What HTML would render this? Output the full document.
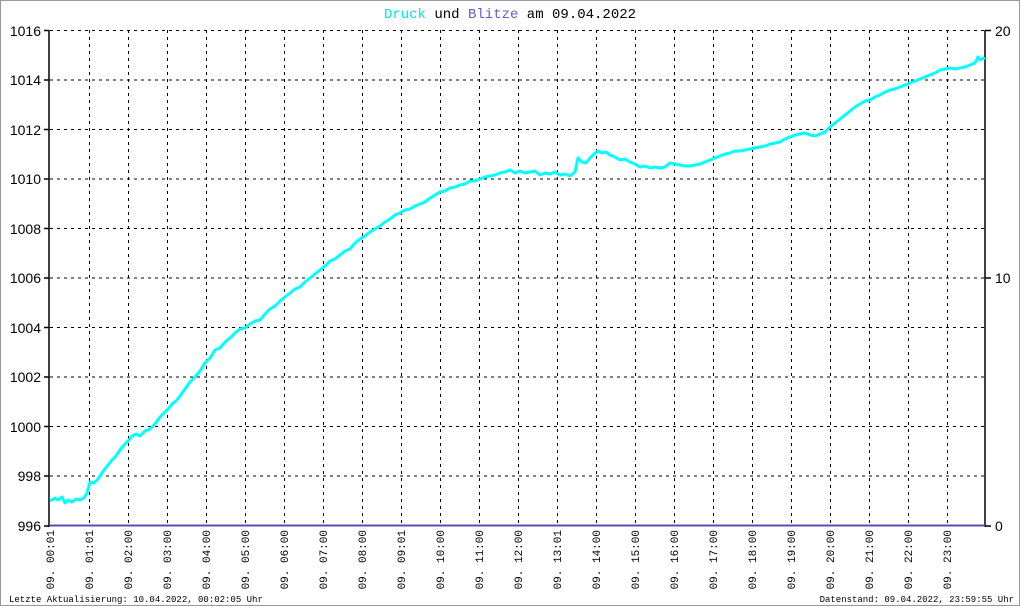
<!DOCTYPE html>
<html><head><meta charset="utf-8"><style>
html,body{margin:0;padding:0;background:#fff}
svg{display:block}
</style></head><body>
<svg width="1020" height="606" xmlns="http://www.w3.org/2000/svg">
<rect x="0.5" y="0.5" width="1019" height="605" fill="#fff" stroke="#999"/>
<text x="510" y="18" font-family="Liberation Mono, monospace" font-size="14" text-anchor="middle"><tspan fill="#00e5e5">Druck</tspan><tspan fill="#000"> und </tspan><tspan fill="#6a5acd">Blitze</tspan><tspan fill="#000"> am 09.04.2022</tspan></text>
<g stroke="#000" stroke-width="1" stroke-dasharray="3,4" fill="none">
<path d="M50 30.5H985M50 80H985M50 129.5H985M50 179H985M50 228.5H985M50 278H985M50 327.5H985M50 377H985M50 426.5H985M50 476H985"/>
<path d="M89.5 30V526M128.5 30V526M167.5 30V526M206.5 30V526M245.5 30V526M284.5 30V526M323.5 30V526M362.5 30V526M401.5 30V526M440.5 30V526M479.5 30V526M518.5 30V526M557.5 30V526M596.5 30V526M635.5 30V526M674.5 30V526M713.5 30V526M752.5 30V526M791.5 30V526M830.5 30V526M869.5 30V526M908.5 30V526M947.5 30V526"/>
</g>
<g stroke="#000" stroke-width="1.5" fill="none">
<path d="M49 30V527M985 30V527"/>
<path d="M44 30.5H49M44 80H49M44 129.5H49M44 179H49M44 228.5H49M44 278H49M44 327.5H49M44 377H49M44 426.5H49M44 476H49M44 526H49"/>
<path d="M985 30.5H991M985 278H991M985 526H991"/>
</g>
<line x1="49" y1="525.5" x2="985" y2="525.5" stroke="#5a4fb0" stroke-width="2"/>
<g font-family="Liberation Sans, sans-serif" font-size="14" text-anchor="end" fill="#000">
<text x="41" y="36">1016</text><text x="41" y="85">1014</text><text x="41" y="135">1012</text><text x="41" y="184">1010</text><text x="41" y="234">1008</text><text x="41" y="283">1006</text><text x="41" y="333">1004</text><text x="41" y="382">1002</text><text x="41" y="432">1000</text><text x="41" y="481">998</text><text x="41" y="531">996</text>
</g>
<g font-family="Liberation Sans, sans-serif" font-size="14" fill="#000">
<text x="995" y="36">20</text><text x="995" y="283">10</text><text x="995" y="531">0</text>
</g>
<polyline fill="none" stroke="#00ffff" stroke-width="3" stroke-linejoin="round" points="
50,501 55,498 58,500 62,497 65,503 68,500 72,502 76,499 80,500 84,498 87,493 90,482 94,483 98,479 100,476 104,470 108,465 112,460 116,456 120,450 125,444 128,441 132,436 136,434 140,436 145,431 150,429 155,424 160,417 164,413 168,409 172,404 176,401 180,396 185,389 190,382 195,377 200,371 205,363 210,358 215,350 220,348 225,342 230,338 235,333 240,329 245,328 250,324 255,321 260,320 265,314 270,309 275,306 280,301 285,297 290,293 295,289 300,287 305,282 310,278 315,274 320,270 325,266 330,261 335,259 340,255 345,251 350,249 355,243 360,239 365,236 370,232 375,229 380,226 385,222 390,219 395,215 400,213 405,210 410,209 415,206 420,204 425,202 430,198 435,195 440,192 445,191 450,188 455,187 460,185 465,184 470,181 475,181 480,179 485,177 490,176 495,175 500,173 505,172 510,170 515,173 520,171 525,173 530,172 535,171 540,175 545,173 550,174 555,172 560,175 565,174 570,176 575,172 578,158 582,162 586,163 590,158 594,154 598,151 602,153 606,152 610,155 615,157 620,160 625,159 630,162 635,164 640,167 645,166 650,168 655,167 660,168 665,167 670,163 675,164 680,165 685,166 690,166 695,165 700,164 705,162 710,160 715,158 720,156 725,154 730,153 735,151 740,151 745,150 750,149 755,148 760,147 765,146 770,144 775,143 780,142 785,139 790,137 795,135 800,134 805,133 810,135 815,136 820,134 825,132 830,127 835,123 840,119 845,115 850,111 855,107 860,104 865,101 870,100 875,97 880,95 885,92 890,90 895,89 900,87 905,85 910,83 915,81 920,79 925,77 930,75 935,73 940,70 945,69 950,68 955,69 960,68 965,67 970,65 975,63 978,57 980,60 983,58 985,59"/>
<g font-family="Liberation Mono, monospace" font-size="11" fill="#000" text-anchor="end">
<text transform="translate(54,530) rotate(-90)">09. 00:01</text>
<text transform="translate(93,530) rotate(-90)">09. 01:01</text>
<text transform="translate(132,530) rotate(-90)">09. 02:00</text>
<text transform="translate(171,530) rotate(-90)">09. 03:00</text>
<text transform="translate(210,530) rotate(-90)">09. 04:00</text>
<text transform="translate(249,530) rotate(-90)">09. 05:00</text>
<text transform="translate(288,530) rotate(-90)">09. 06:00</text>
<text transform="translate(327,530) rotate(-90)">09. 07:00</text>
<text transform="translate(366,530) rotate(-90)">09. 08:00</text>
<text transform="translate(405,530) rotate(-90)">09. 09:01</text>
<text transform="translate(444,530) rotate(-90)">09. 10:00</text>
<text transform="translate(483,530) rotate(-90)">09. 11:00</text>
<text transform="translate(522,530) rotate(-90)">09. 12:00</text>
<text transform="translate(561,530) rotate(-90)">09. 13:01</text>
<text transform="translate(600,530) rotate(-90)">09. 14:00</text>
<text transform="translate(639,530) rotate(-90)">09. 15:00</text>
<text transform="translate(678,530) rotate(-90)">09. 16:00</text>
<text transform="translate(717,530) rotate(-90)">09. 17:00</text>
<text transform="translate(756,530) rotate(-90)">09. 18:00</text>
<text transform="translate(795,530) rotate(-90)">09. 19:00</text>
<text transform="translate(834,530) rotate(-90)">09. 20:00</text>
<text transform="translate(873,530) rotate(-90)">09. 21:00</text>
<text transform="translate(912,530) rotate(-90)">09. 22:00</text>
<text transform="translate(951,530) rotate(-90)">09. 23:00</text>
</g>
<g font-family="Liberation Mono, monospace" font-size="9" fill="#000">
<text x="9" y="602">Letzte Aktualisierung: 10.04.2022, 00:02:05 Uhr</text>
<text x="1014" y="602" text-anchor="end">Datenstand: 09.04.2022, 23:59:55 Uhr</text>
</g>
</svg>
</body></html>
